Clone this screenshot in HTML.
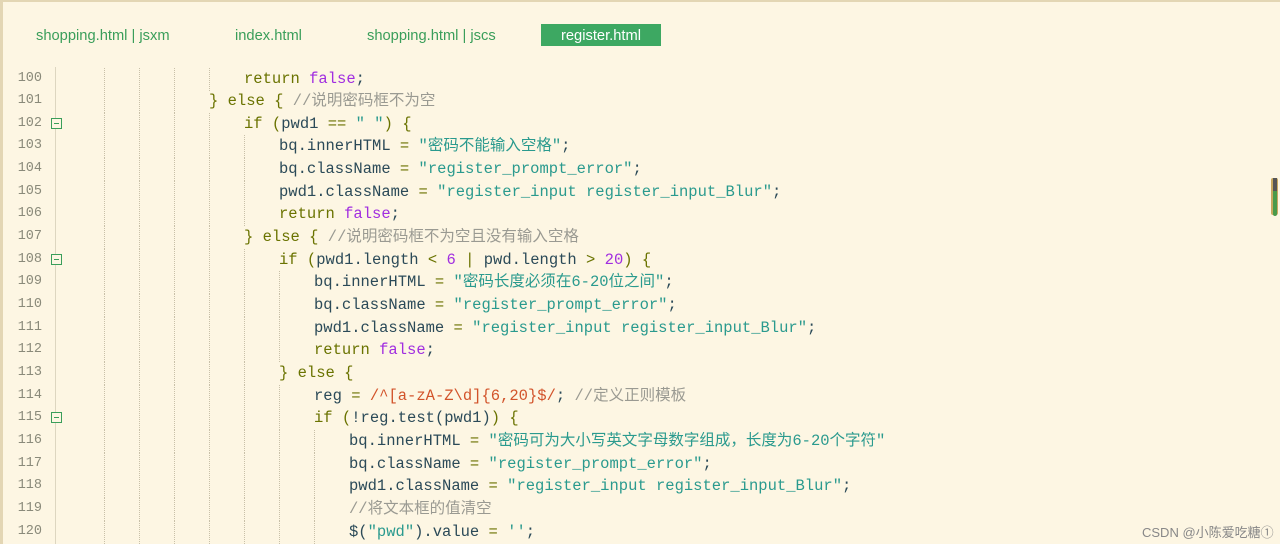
<!DOCTYPE html>
<html><head><meta charset="utf-8"><style>
body{margin:0;width:1280px;height:544px;overflow:hidden;background:#fdf6e3;position:relative;font-family:"Liberation Mono","Noto Sans CJK SC",monospace;}
.bt{position:absolute;left:0;top:0;width:1280px;height:2px;background:#e3d6b4}
.bl{position:absolute;left:0;top:0;width:3px;height:544px;background:#e3d6b4}
.tab{position:absolute;top:24px;height:18px;padding-top:4px;line-height:22px;font:14.7px "Liberation Sans",sans-serif;color:#3a9e5a}
.act{background:#3da862;color:#fff;text-align:center;width:120px;left:541px}
.ln{position:absolute;left:0;width:42px;text-align:right;font-size:13.5px;color:#8a8a7a;height:22px;line-height:22px}
.gut{position:absolute;left:55px;top:67px;width:1px;height:477px;background:#ddd6c0}
.code{position:absolute;white-space:pre;font-size:15.5px;height:22px;line-height:22px;color:#2b4a58}
.g{position:absolute;width:0;border-left:1px dotted #c8c0a8;height:23px}
.k{color:#6a7300}.s{color:#2a9a8e}.n{color:#a12ee0}.r{color:#d2532a}.c{color:#9a9a92}
.fold{position:absolute;left:51px;width:9px;height:9px;border:1px solid #3a9e5a;background:#fdf6e3}
.fold:after{content:"";position:absolute;left:2px;top:4px;width:5px;height:1px;background:#3a9e5a}
.wm{position:absolute;left:1142px;top:522px;font:13px "Liberation Sans","Noto Sans CJK SC",sans-serif;color:#888}
</style></head><body>
<div class="bt"></div><div class="bl"></div>
<div class="tab" style="left:36px">shopping.html | jsxm</div>
<div class="tab" style="left:235px">index.html</div>
<div class="tab" style="left:367px">shopping.html | jscs</div>
<div class="tab act">register.html</div>
<div class="gut"></div>
<div style="position:absolute;left:1271px;top:178px;width:7px;height:37px;background:#c8a860;border-radius:2px"></div>
<div style="position:absolute;left:1273px;top:178px;width:4px;height:38px;background:#4a9a4a;border-radius:2px"></div>
<div style="position:absolute;left:1273px;top:178px;width:4px;height:13px;background:#555"></div>
<div class="wm">CSDN @小陈爱吃糖①</div>
<div id="c"></div>
<script>
var L=[
[5,'<span class="k">return</span> <span class="n">false</span>;'],
[4,'<span class="k">}</span> <span class="k">else</span> <span class="k">{</span> <span class="c">//说明密码框不为空</span>'],
[5,'<span class="k">if</span> <span class="k">(</span>pwd1 <span class="k">==</span> <span class="s">" "</span><span class="k">)</span> <span class="k">{</span>',1],
[6,'bq.innerHTML <span class="k">=</span> <span class="s">"密码不能输入空格"</span>;'],
[6,'bq.className <span class="k">=</span> <span class="s">"register_prompt_error"</span>;'],
[6,'pwd1.className <span class="k">=</span> <span class="s">"register_input register_input_Blur"</span>;'],
[6,'<span class="k">return</span> <span class="n">false</span>;'],
[5,'<span class="k">}</span> <span class="k">else</span> <span class="k">{</span> <span class="c">//说明密码框不为空且没有输入空格</span>'],
[6,'<span class="k">if</span> <span class="k">(</span>pwd1.length <span class="k">&lt;</span> <span class="n">6</span> <span class="k">|</span> pwd.length <span class="k">&gt;</span> <span class="n">20</span><span class="k">)</span> <span class="k">{</span>',1],
[7,'bq.innerHTML <span class="k">=</span> <span class="s">"密码长度必须在6-20位之间"</span>;'],
[7,'bq.className <span class="k">=</span> <span class="s">"register_prompt_error"</span>;'],
[7,'pwd1.className <span class="k">=</span> <span class="s">"register_input register_input_Blur"</span>;'],
[7,'<span class="k">return</span> <span class="n">false</span>;'],
[6,'<span class="k">}</span> <span class="k">else</span> <span class="k">{</span>'],
[7,'reg <span class="k">=</span> <span class="r">/^[a-zA-Z\\d]{6,20}$/</span>; <span class="c">//定义正则模板</span>'],
[7,'<span class="k">if</span> <span class="k">(</span>!reg.test(pwd1)<span class="k">)</span> <span class="k">{</span>',1],
[8,'bq.innerHTML <span class="k">=</span> <span class="s">"密码可为大小写英文字母数字组成，长度为6-20个字符"</span>'],
[8,'bq.className <span class="k">=</span> <span class="s">"register_prompt_error"</span>;'],
[8,'pwd1.className <span class="k">=</span> <span class="s">"register_input register_input_Blur"</span>;'],
[8,'<span class="c">//将文本框的值清空</span>'],
[8,'$(<span class="s">"pwd"</span>).value <span class="k">=</span> <span class="s">\'\'</span>;']
];
var h='';
for(var i=0;i<L.length;i++){
 var t=67.5+i*22.65, lv=L[i][0];
 h+='<div class="ln" style="top:'+t+'px">'+(100+i)+'</div>';
 if(L[i][2]) h+='<div class="fold" style="top:'+(t+5)+'px"></div>';
 for(var k=1;k<lv;k++) h+='<div class="g" style="left:'+(69+35*k)+'px;top:'+t+'px"></div>';
 h+='<div class="code" style="left:'+(69+35*lv)+'px;top:'+t+'px">'+L[i][1]+'</div>';
}
document.getElementById('c').innerHTML=h;
</script>
</body></html>
